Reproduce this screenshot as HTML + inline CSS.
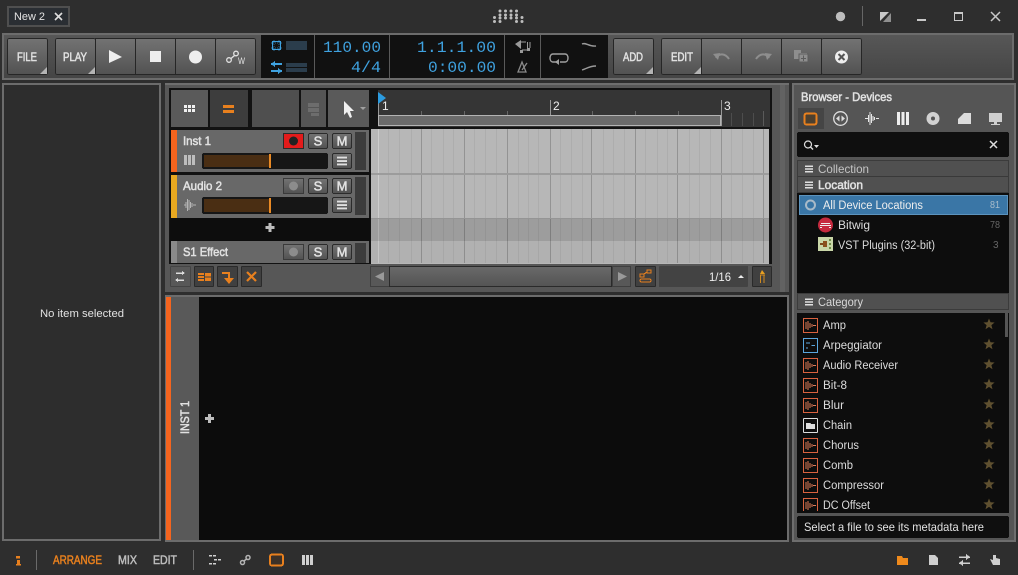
<!DOCTYPE html>
<html><head><meta charset="utf-8"><title>Bitwig</title>
<style>
html,body{margin:0;padding:0;background:#2e2e2e;width:1018px;height:575px;overflow:hidden}
svg{display:block}
text{font-family:"Liberation Sans",sans-serif}
text:not([font-size]){font-size:11px}
text:not([fill]){fill:#e2e2e2}
svg .b{stroke:#e2e2e2;stroke-width:.5px}
svg .m{font-family:"Liberation Mono",monospace;font-size:16px;fill:#3fa2e0}
svg .cat{fill:#dcdcdc;font-size:11.5px}
svg .o{fill:#e8801e;stroke:#e8801e}
svg .g{fill:#bdbdbd;stroke:#bdbdbd}
</style></head><body>
<svg width="1018" height="575" viewBox="0 0 1018 575" xmlns="http://www.w3.org/2000/svg" shape-rendering="crispEdges">
<defs>
<linearGradient id="btn" x1="0" y1="0" x2="0" y2="1"><stop offset="0" stop-color="#737373"/><stop offset="1" stop-color="#525252"/></linearGradient>
<linearGradient id="bar" x1="0" y1="0" x2="0" y2="1"><stop offset="0" stop-color="#575757"/><stop offset="1" stop-color="#454545"/></linearGradient>
<linearGradient id="sb" x1="0" y1="0" x2="0" y2="1"><stop offset="0" stop-color="#6a6a6a"/><stop offset="1" stop-color="#535353"/></linearGradient>
<clipPath id="clist"><rect x="798" y="313" width="210" height="198"/></clipPath>
<clipPath id="ctr"><rect x="170" y="129" width="200" height="134"/></clipPath>
<symbol id="aud" viewBox="0 0 15 15" overflow="visible"><rect x="0.5" y="0.5" width="14" height="14" fill="none" stroke="#d9623f" stroke-width="1"/><path d="M3 4V11M5 3V12M7 5V10M9 6V9M10 7.500H13" stroke="#e07a58" fill="none" stroke-width="1"/></symbol>
<symbol id="star" viewBox="0 0 12 12"><polygon shape-rendering="auto" points="6,0.5 7.5,4.3 11.6,4.5 8.4,7.1 9.5,11.2 6,8.9 2.5,11.2 3.6,7.1 0.4,4.5 4.5,4.3" fill="#5f5030"/></symbol>
<symbol id="ham" viewBox="0 0 8 8"><path d="M0 .5H8V2H0ZM0 3.250H8V4.750H0ZM0 6H8V7.500H0Z" fill="#e0e0e0" shape-rendering="auto"/></symbol>
</defs>

<!-- title bar -->
<rect width="1018" height="575" fill="#2e2e2e"/>
<rect x="8" y="7" width="61" height="19" fill="#2a2e33" stroke="#4f4f4f" stroke-width="2"/>
<text x="14" y="20" textLength="31" lengthAdjust="spacingAndGlyphs">New 2</text>
<path d="M55 13L62 20M62 13L55 20" stroke="#ddd" stroke-width="1.600" fill="none" shape-rendering="auto"/>
<g fill="#bdbdbd" shape-rendering="auto">
<circle cx="500" cy="11" r="1.500"/><circle cx="505.500" cy="11" r="1.500"/><circle cx="511" cy="11" r="1.500"/><circle cx="516.500" cy="11" r="1.500"/>
<circle cx="500" cy="15" r="1.500"/><circle cx="505.500" cy="15" r="1.500"/><circle cx="511" cy="15" r="1.500"/><circle cx="516.500" cy="15" r="1.500"/>
<circle cx="494.500" cy="17.500" r="1.500"/><circle cx="522" cy="17.500" r="1.500"/><circle cx="505.500" cy="18" r="1.500"/><circle cx="511" cy="18" r="1.500"/><circle cx="500" cy="18" r="1.500"/><circle cx="516.500" cy="18" r="1.500"/>
<circle cx="494.500" cy="21.500" r="1.500"/><circle cx="500" cy="21.500" r="1.500"/><circle cx="516.500" cy="21.500" r="1.500"/><circle cx="522" cy="21.500" r="1.500"/>
<circle cx="840.500" cy="16.500" r="4.700"/>
</g>
<rect x="862" y="6" width="1" height="20" fill="#666"/>
<g shape-rendering="auto"><polygon points="880,12 889,12 880,21" fill="#c8c8c8"/><polygon points="891,13 891,22 883,22" fill="#8f8f8f"/></g>
<rect x="917" y="19" width="9" height="2" fill="#c8c8c8"/>
<rect x="954.500" y="12.500" width="8" height="8" fill="none" stroke="#c8c8c8"/><rect x="954" y="12" width="9" height="2" fill="#c8c8c8"/>
<path d="M991 12L1000 21M1000 12L991 21" stroke="#c8c8c8" stroke-width="1.500" shape-rendering="auto"/>

<!-- toolbar -->
<rect x="2" y="33" width="1012" height="47" fill="#6c6c6c"/>
<rect x="4" y="35" width="1008" height="43" fill="url(#bar)"/>
<g stroke="#262626" fill="url(#btn)">
<rect x="7.500" y="38.500" width="40" height="36" rx="2"/>
<rect x="55.500" y="38.500" width="40" height="36" rx="2"/>
<rect x="95.500" y="38.500" width="40" height="36"/>
<rect x="135.500" y="38.500" width="40" height="36"/>
<rect x="175.500" y="38.500" width="40" height="36"/>
<rect x="215.500" y="38.500" width="40" height="36" rx="2"/>
<rect x="613.500" y="38.500" width="40" height="36" rx="2"/>
<rect x="661.500" y="38.500" width="40" height="36" rx="2"/>
<rect x="701.500" y="38.500" width="40" height="36"/>
<rect x="741.500" y="38.500" width="40" height="36"/>
<rect x="781.500" y="38.500" width="40" height="36"/>
<rect x="821.500" y="38.500" width="40" height="36" rx="2"/>
</g>
<g fill="#b4b4b4" shape-rendering="auto">
<polygon points="47,67 47,74 40,74"/><polygon points="95,67 95,74 88,74"/><polygon points="653,67 653,74 646,74"/><polygon points="701,67 701,74 694,74"/>
</g>
<text class="b" x="17" y="61" font-size="12" textLength="20" lengthAdjust="spacingAndGlyphs">FILE</text>
<text class="b" x="63" y="61" font-size="12" textLength="24" lengthAdjust="spacingAndGlyphs">PLAY</text>
<text class="b" x="623" y="61" font-size="12" textLength="20" lengthAdjust="spacingAndGlyphs">ADD</text>
<text class="b" x="671" y="61" font-size="12" textLength="22" lengthAdjust="spacingAndGlyphs">EDIT</text>
<polygon points="109,50 122,57 109,63" fill="#eee" shape-rendering="auto"/>
<rect x="150" y="51" width="11" height="11" fill="#eee"/>
<circle cx="195.500" cy="57" r="6.500" fill="#eee" shape-rendering="auto"/>
<g fill="none" stroke="#e2e2e2" stroke-width="1.300" shape-rendering="auto"><circle cx="229" cy="60" r="2.300"/><circle cx="236" cy="53.500" r="2.300"/><path d="M231 58.500L234.500 55.500"/></g>
<text x="238" y="64" font-size="9" textLength="7" lengthAdjust="spacingAndGlyphs">W</text>
<!-- undo etc -->
<g fill="none" stroke="#8e8e8e" stroke-width="2" shape-rendering="auto"><path d="M716 58C719 53 725 53 729 59"/><path d="M756 59C760 53 766 53 769 58"/></g>
<polygon points="713,54 720,53 718,60" fill="#8e8e8e" shape-rendering="auto"/><polygon points="772,54 765,53 767,60" fill="#8e8e8e" shape-rendering="auto"/>
<path d="M794 50H801V53H807L808 62H799V59H794Z" fill="#8e8e8e" shape-rendering="auto"/><rect x="799" y="54" width="9" height="8" fill="#8e8e8e" stroke="#5d5d5d"/><path d="M803.500 55.500V61M801 58.300H806" stroke="#5c5c5c"/>
<circle cx="841.500" cy="57" r="6.500" fill="#eee" shape-rendering="auto"/>
<path d="M838.500 54L844.500 60M844.500 54L838.500 60" stroke="#555" stroke-width="2" shape-rendering="auto"/>

<!-- display -->
<rect x="261" y="35" width="347" height="43" fill="#111"/>
<rect x="314" y="35" width="1" height="43" fill="#5a5a5a"/><rect x="389" y="35" width="1" height="43" fill="#5a5a5a"/><rect x="504" y="35" width="1" height="43" fill="#5a5a5a"/><rect x="540" y="35" width="1" height="43" fill="#5a5a5a"/>
<rect x="272.500" y="41.500" width="8" height="8" fill="none" stroke="#3fa2e0"/><path d="M271 43H282M271 48H282M274 40V51M279 40V51" stroke="#3fa2e0" stroke-dasharray="1 1" opacity=".6"/>
<rect x="286" y="41" width="21" height="9" fill="#2b3d4c"/>
<path d="M271 64H282M271 71H282" stroke="#3fa2e0" stroke-width="2"/><polygon points="275,61 271,64 275,67" fill="#3fa2e0"/><polygon points="278,68 282,71 278,74" fill="#3fa2e0"/>
<rect x="286" y="63" width="21" height="4" fill="#2b3d4c"/><rect x="286" y="68" width="21" height="4" fill="#2b3d4c"/>
<text class="m" x="323" y="52" textLength="58" lengthAdjust="spacingAndGlyphs">110.00</text>
<text class="m" x="351" y="72" textLength="30" lengthAdjust="spacingAndGlyphs">4/4</text>
<text class="m" x="417" y="52" textLength="79" lengthAdjust="spacingAndGlyphs">1.1.1.00</text>
<text class="m" x="428" y="72" textLength="68" lengthAdjust="spacingAndGlyphs">0:00.00</text>
<polygon points="515,44 521,40 521,49" fill="#9a9a9a" shape-rendering="auto"/><path d="M521 42H526M527.500 42V48M530 42V48M522 50H529M522 50V52" stroke="#9a9a9a" fill="none"/><rect x="520" y="50" width="3" height="3" fill="#9a9a9a"/><rect x="527" y="48" width="3" height="3" fill="#9a9a9a"/>
<path d="M518 72L522 62L526 72ZM522 70L527 63" fill="none" stroke="#8a8a8a" stroke-width="1.300" shape-rendering="auto"/>
<path d="M557 62H553C549 62 549 54 553 54H565C569 54 569 62 565 62H560" fill="none" stroke="#a0a0a0" stroke-width="1.400" shape-rendering="auto"/><polygon points="559,59 555,62 559,65" fill="#a0a0a0" shape-rendering="auto"/>
<path d="M582 44C586 42 589 47 596 46" fill="none" stroke="#9a9a9a" stroke-width="1.400" shape-rendering="auto"/><path d="M582 70C586 69 589 66 596 66" fill="none" stroke="#9a9a9a" stroke-width="1.400" shape-rendering="auto"/>

<!-- left panel -->
<rect x="3" y="84" width="157" height="456" fill="#2d2d2d" stroke="#6c6c6c" stroke-width="2"/>
<text x="40" y="317" textLength="84" lengthAdjust="spacingAndGlyphs">No item selected</text>

<!-- arranger -->
<rect x="165" y="83" width="624" height="209" fill="#575757"/>
<rect x="165" y="83" width="624" height="2" fill="#6e6e6e"/>
<rect x="780" y="85" width="5" height="207" fill="#626262"/>
<rect x="169" y="88" width="603" height="176" fill="#121212"/>
<!-- header buttons -->
<rect x="171" y="90" width="37" height="37" fill="#5a5a5a"/>
<rect x="210" y="90" width="38" height="37" fill="#3d3d3d"/>
<rect x="252" y="90" width="47" height="37" fill="#4f4f4f"/>
<rect x="301" y="90" width="25" height="37" fill="#555"/>
<rect x="328" y="90" width="41" height="37" fill="#5a5a5a"/>
<g fill="#f0f0f0"><rect x="184" y="105" width="3" height="3"/><rect x="188" y="105" width="3" height="3"/><rect x="192" y="105" width="3" height="3"/><rect x="184" y="109" width="3" height="3"/><rect x="188" y="109" width="3" height="3"/><rect x="192" y="109" width="3" height="3"/></g>
<rect x="223" y="105" width="11" height="3" fill="#e8801e"/><rect x="223" y="110" width="11" height="3" fill="#e8801e"/>
<g fill="#6d6d6d"><rect x="308" y="103" width="11" height="4"/><rect x="308" y="108" width="11" height="4"/><rect x="311" y="113" width="8" height="3"/></g>
<polygon points="344,101 344,115 347,112 350,118 352,117 350,111 354,111" fill="#f0f0f0" shape-rendering="auto"/>
<polygon points="360,107 366,107 363,110" fill="#a0a0a0" shape-rendering="auto"/>
<!-- ruler -->
<rect x="378" y="90" width="392" height="37" fill="#353535"/>
<g fill="#666"><rect x="378" y="100" width="1" height="15" fill="#999"/><rect x="550" y="100" width="1" height="15" fill="#999"/><rect x="721" y="100" width="1" height="26" fill="#999"/>
<rect x="421" y="111" width="1" height="4"/><rect x="464" y="111" width="1" height="4"/><rect x="507" y="111" width="1" height="4"/><rect x="592" y="111" width="1" height="4"/><rect x="635" y="111" width="1" height="4"/><rect x="678" y="111" width="1" height="4"/>
<rect x="731" y="113" width="1" height="13" fill="#4d4d4d"/><rect x="742" y="113" width="1" height="13" fill="#4d4d4d"/><rect x="753" y="113" width="1" height="13" fill="#4d4d4d"/><rect x="763" y="111" width="1" height="15" fill="#5a5a5a"/></g>
<rect x="378.500" y="115.500" width="342" height="10" fill="#6b6b6b" stroke="#b4b4b4"/>
<text x="382" y="110" fill="#eee" font-size="12">1</text><text x="553" y="110" fill="#eee" font-size="12">2</text><text x="724" y="110" fill="#eee" font-size="12">3</text>
<polygon points="378,92 386,98 378,104" fill="#2c9ce0" shape-rendering="auto"/>
<!-- grid -->
<rect x="371" y="129" width="398" height="135" fill="#b7b7b7"/>
<g fill="#adadad">
<rect x="388" y="129" width="1" height="134"/><rect x="399" y="129" width="1" height="134"/><rect x="411" y="129" width="1" height="134"/><rect x="431" y="129" width="1" height="134"/><rect x="443" y="129" width="1" height="134"/><rect x="453" y="129" width="1" height="134"/><rect x="474" y="129" width="1" height="134"/><rect x="485" y="129" width="1" height="134"/><rect x="496" y="129" width="1" height="134"/><rect x="518" y="129" width="1" height="134"/><rect x="528" y="129" width="1" height="134"/><rect x="538" y="129" width="1" height="134"/><rect x="560" y="129" width="1" height="134"/><rect x="571" y="129" width="1" height="134"/><rect x="582" y="129" width="1" height="134"/><rect x="603" y="129" width="1" height="134"/><rect x="613" y="129" width="1" height="134"/><rect x="624" y="129" width="1" height="134"/><rect x="645" y="129" width="1" height="134"/><rect x="657" y="129" width="1" height="134"/><rect x="667" y="129" width="1" height="134"/><rect x="689" y="129" width="1" height="134"/><rect x="699" y="129" width="1" height="134"/><rect x="710" y="129" width="1" height="134"/><rect x="731" y="129" width="1" height="134"/><rect x="742" y="129" width="1" height="134"/><rect x="753" y="129" width="1" height="134"/>
</g>
<g fill="#939393">
<rect x="421" y="129" width="1" height="134"/><rect x="464" y="129" width="1" height="134"/><rect x="507" y="129" width="1" height="134"/><rect x="550" y="129" width="1" height="134"/><rect x="591" y="129" width="1" height="134"/><rect x="635" y="129" width="1" height="134"/><rect x="677" y="129" width="1" height="134"/><rect x="721" y="129" width="1" height="134"/><rect x="763" y="129" width="1" height="134"/>
</g>
<rect x="378" y="129" width="1" height="134" fill="#cccccc"/>
<rect x="371" y="219" width="398" height="22" fill="#000" opacity=".14"/>
<rect x="371" y="241" width="398" height="22" fill="#000" opacity=".03"/>
<rect x="371" y="173" width="398" height="2" fill="#9c9c9c"/>
<rect x="371" y="218" width="398" height="1" fill="#959595"/>
<!-- tracks -->
<rect x="170" y="129" width="200" height="134" fill="#111"/>
<g clip-path="url(#ctr)">
<!-- Inst 1 -->
<rect x="171" y="130" width="198" height="42" fill="#686868"/>
<rect x="171" y="130" width="6" height="42" fill="#f5641e"/>
<text class="b" x="183" y="145" font-size="12" textLength="28" lengthAdjust="spacingAndGlyphs">Inst 1</text>
<rect x="283.500" y="133.500" width="20" height="15" fill="#e31b1b" stroke="#2b2b2b"/><circle cx="293.500" cy="141" r="4.500" fill="#222" shape-rendering="auto"/>
<rect x="308.500" y="133.500" width="19" height="15" rx="1.500" fill="url(#btn)" stroke="#2b2b2b"/><rect x="332.500" y="133.500" width="19" height="15" rx="1.500" fill="url(#btn)" stroke="#2b2b2b"/>
<text class="b" x="318" y="145.500" text-anchor="middle" font-size="13">S</text><text class="b" x="342" y="145.500" text-anchor="middle" font-size="13">M</text>
<rect x="355" y="132" width="11" height="38" fill="#3c3c3c"/>
<g fill="#bdbdbd"><rect x="184" y="155" width="3" height="10"/><rect x="188" y="155" width="3" height="10"/><rect x="192" y="155" width="3" height="10"/></g>
<rect x="202" y="153" width="126" height="16" rx="2" fill="#161616"/>
<rect x="204" y="155" width="65" height="12" fill="#4a2e13"/><rect x="269" y="154" width="2" height="14" fill="#e98a25"/>
<rect x="332.500" y="153.500" width="19" height="15" rx="1.500" fill="url(#btn)" stroke="#2b2b2b"/><use href="#ham" x="337" y="156" width="10" height="10"/>
<!-- Audio 2 -->
<rect x="171" y="175" width="198" height="43" fill="#686868"/>
<rect x="171" y="175" width="6" height="43" fill="#e8a820"/>
<text class="b" x="183" y="190" font-size="12" textLength="39" lengthAdjust="spacingAndGlyphs">Audio 2</text>
<rect x="283.500" y="178.500" width="20" height="15" fill="url(#btn)" stroke="#3a3a3a"/><circle cx="293.500" cy="186" r="4.500" fill="#8c8c8c" shape-rendering="auto"/>
<rect x="308.500" y="178.500" width="19" height="15" rx="1.500" fill="url(#btn)" stroke="#2b2b2b"/><rect x="332.500" y="178.500" width="19" height="15" rx="1.500" fill="url(#btn)" stroke="#2b2b2b"/>
<text class="b" x="318" y="190.500" text-anchor="middle" font-size="13">S</text><text class="b" x="342" y="190.500" text-anchor="middle" font-size="13">M</text>
<rect x="355" y="177" width="11" height="38" fill="#3c3c3c"/>
<path d="M184 205H186M186 202V208M187.500 199V211M189 200V210M190.500 202V208M192 203V207M193 205H196" stroke="#b4b4b4" fill="none"/>
<rect x="202" y="197" width="126" height="17" rx="2" fill="#161616"/>
<rect x="204" y="199" width="65" height="13" fill="#4a2e13"/><rect x="269" y="198" width="2" height="15" fill="#e98a25"/>
<rect x="332.500" y="197.500" width="19" height="15" rx="1.500" fill="url(#btn)" stroke="#2b2b2b"/><use href="#ham" x="337" y="200" width="10" height="10"/>
<!-- add -->
<rect x="170" y="218" width="200" height="23" fill="#0d0d0d"/>
<path d="M270 223V232M265.500 227.500H274.500" stroke="#bdbdbd" stroke-width="3"/>
<!-- S1 Effect -->
<rect x="171" y="241" width="198" height="22" fill="#686868"/>
<rect x="171" y="241" width="6" height="22" fill="#8a8a8a"/>
<text class="b" x="183" y="256" font-size="12" textLength="45" lengthAdjust="spacingAndGlyphs">S1 Effect</text>
<rect x="283.500" y="244.500" width="20" height="15" fill="url(#btn)" stroke="#3a3a3a"/><circle cx="293.500" cy="252" r="4.500" fill="#8c8c8c" shape-rendering="auto"/>
<rect x="308.500" y="244.500" width="19" height="15" rx="1.500" fill="url(#btn)" stroke="#2b2b2b"/><rect x="332.500" y="244.500" width="19" height="15" rx="1.500" fill="url(#btn)" stroke="#2b2b2b"/>
<text class="b" x="318" y="256.500" text-anchor="middle" font-size="13">S</text><text class="b" x="342" y="256.500" text-anchor="middle" font-size="13">M</text>
<rect x="355" y="243" width="11" height="20" fill="#3c3c3c"/>
</g>
<!-- arranger bottom bar -->
<rect x="169" y="264" width="603" height="27" fill="#575757"/>
<rect x="170.500" y="266.500" width="20" height="20" rx="1" fill="#585858" stroke="#444"/>
<path d="M176 273H184M176 280H184" stroke="#ddd" stroke-width="1.500"/><polygon points="182,271 185,273 182,275" fill="#ddd"/><polygon points="178,278 175,280 178,282" fill="#ddd"/>
<rect x="194.500" y="266.500" width="19" height="20" rx="1" fill="#404040" stroke="#2a2a2a"/>
<g fill="#e8801e"><rect x="198" y="273" width="6" height="2"/><rect x="198" y="276" width="6" height="2"/><rect x="198" y="279" width="6" height="2"/><rect x="205" y="273" width="6" height="3.500"/><rect x="205" y="277.500" width="6" height="3.500"/></g>
<rect x="217.500" y="266.500" width="20" height="20" rx="1" fill="#404040" stroke="#2a2a2a"/>
<path d="M222 273H229V279" fill="none" stroke="#e8801e" stroke-width="2"/><polygon points="224,278 234,278 229,284" fill="#e8801e" shape-rendering="auto"/>
<rect x="241.500" y="266.500" width="20" height="20" rx="1" fill="#404040" stroke="#2a2a2a"/>
<path d="M247 272L256 281M256 272L247 281" stroke="#e8801e" stroke-width="2.200" shape-rendering="auto"/>
<rect x="370.500" y="266.500" width="19" height="20" fill="#585858" stroke="#3f3f3f"/><polygon points="384,272 375,276.500 384,281" fill="#999" shape-rendering="auto"/>
<rect x="390" y="266" width="221" height="21" fill="url(#sb)"/><rect x="390" y="266" width="221" height="1" fill="#2a2a2a"/><rect x="390" y="286" width="221" height="1" fill="#2a2a2a"/><rect x="389" y="266" width="1" height="21" fill="#2a2a2a"/><rect x="611" y="266" width="1" height="21" fill="#2a2a2a"/>
<rect x="612.500" y="266.500" width="18" height="20" fill="#585858" stroke="#3f3f3f"/><polygon points="618,272 627,276.500 618,281" fill="#999" shape-rendering="auto"/>
<rect x="635.500" y="266.500" width="20" height="20" rx="1" fill="#404040" stroke="#2a2a2a"/>
<g fill="none" stroke="#e8801e" stroke-width="1.200"><rect x="640" y="279" width="11" height="3" rx="1.500"/><rect x="640" y="274" width="4" height="3"/><rect x="647" y="270" width="4" height="3"/><path d="M644 274L647 272"/></g>
<rect x="659" y="266" width="89" height="21" rx="1" fill="#434343"/>
<text x="709" y="281" font-size="12" textLength="22" lengthAdjust="spacingAndGlyphs" fill="#eee">1/16</text>
<polygon points="738,278 744,278 741,275" fill="#eee" shape-rendering="auto"/>
<rect x="752.500" y="266.500" width="19" height="20" rx="1" fill="#404040" stroke="#2a2a2a"/>
<polygon points="762,270 765,274 760,274" fill="#e8a020" shape-rendering="auto"/><path d="M760 275H765M760.500 275V283M764 275V283" stroke="#d08a20" fill="none"/>

<!-- detail panel -->
<rect x="165" y="295" width="624" height="247" fill="#6c6c6c"/>
<rect x="167" y="297" width="620" height="243" fill="#0c0c0c"/>
<rect x="166" y="297" width="5" height="243" fill="#f5641e"/>
<rect x="171" y="297" width="28" height="243" fill="#595959"/>
<text class="b" x="189" y="434" font-size="12" transform="rotate(-90 189 434)" textLength="33" lengthAdjust="spacingAndGlyphs">INST 1</text>
<path d="M209.500 414V423M205 418.500H214" stroke="#bdbdbd" stroke-width="3"/>

<!-- browser -->
<rect x="792" y="83" width="224" height="459" fill="#6e6e6e"/>
<rect x="794" y="85" width="220" height="455" fill="#555"/>
<text class="b" x="801" y="101" font-size="12" textLength="91" lengthAdjust="spacingAndGlyphs">Browser - Devices</text>
<rect x="798" y="108" width="26" height="21" fill="#454545"/>
<rect x="804.500" y="113.500" width="12" height="11" rx="2" fill="#4c4030" stroke="#e8801e" stroke-width="2"/>
<g shape-rendering="auto">
<circle cx="840.500" cy="118.500" r="6.800" fill="none" stroke="#ddd" stroke-width="1.300"/><polygon points="839.500,115.500 839.500,121.500 836,118.500" fill="#ddd"/><polygon points="841.500,115.500 841.500,121.500 845,118.500" fill="#ddd"/>
<path d="M865 118.500H868M868.500 115V122M870 112V125M871.500 114V123M873 116V121M874.500 117V120M876 118.500H879" stroke="#e6e6e6" fill="none"/>
<circle cx="933" cy="118.500" r="6.500" fill="#d2d2d2"/><circle cx="933" cy="118.500" r="2" fill="#555"/>
<polygon points="958,124 958,119 964,113 971,113 971,124" fill="#dcdcdc"/>
</g>
<g fill="#eee"><rect x="897" y="112" width="3" height="13"/><rect x="901.500" y="112" width="3" height="13"/><rect x="906" y="112" width="3" height="13"/></g>
<rect x="989" y="113" width="13" height="9" fill="#cfcfcf"/><rect x="994" y="122" width="3" height="2" fill="#cfcfcf"/><rect x="991" y="124" width="9" height="1" fill="#cfcfcf"/>
<rect x="797" y="132" width="212" height="25" rx="2" fill="#0f0f0f"/>
<g shape-rendering="auto"><circle cx="808" cy="144.500" r="3.500" fill="none" stroke="#ddd" stroke-width="1.200"/><path d="M810.500 147L813 149.500" stroke="#ddd" stroke-width="1.400"/><polygon points="814,145 819,145 816.500,148" fill="#ddd"/>
<path d="M990 141L997 148M997 141L990 148" stroke="#ddd" stroke-width="1.500"/></g>
<rect x="797.500" y="160.500" width="211" height="32" fill="#505050" stroke="#3b3b3b"/>
<rect x="798" y="176" width="210" height="1" fill="#393939"/>
<use href="#ham" x="805" y="165" width="8" height="8"/><use href="#ham" x="805" y="181" width="8" height="8"/>
<text x="818" y="173" textLength="51" lengthAdjust="spacingAndGlyphs" fill="#c4c4c4" font-size="12">Collection</text>
<text class="b" x="818" y="189" font-size="12" textLength="45" lengthAdjust="spacingAndGlyphs">Location</text>
<rect x="797" y="193" width="212" height="100" fill="#0d0d0d"/>
<rect x="799.500" y="195.500" width="208" height="19" fill="#3a76a6" stroke="#5c93bd"/>
<circle cx="810.500" cy="205" r="4.500" fill="none" stroke="#a9bac8" stroke-width="2" shape-rendering="auto"/>
<text class="cat" x="823" y="209" textLength="100" lengthAdjust="spacingAndGlyphs" style="fill:#eee">All Device Locations</text>
<text x="990" y="208" textLength="10" lengthAdjust="spacingAndGlyphs" fill="#a8bccb" font-size="10">81</text>
<circle cx="825.500" cy="225" r="7.500" fill="#c62a3f" shape-rendering="auto"/>
<g fill="#eee"><rect x="821" y="223" width="9" height="1"/><rect x="820" y="225" width="11" height="1"/><rect x="820" y="227" width="2" height="1"/><rect x="829" y="227" width="2" height="1"/></g>
<text class="cat" x="838" y="229" textLength="32" lengthAdjust="spacingAndGlyphs">Bitwig</text>
<text x="990" y="228" textLength="10" lengthAdjust="spacingAndGlyphs" fill="#666" font-size="10">78</text>
<rect x="818" y="237" width="15" height="14" fill="#c9d6a8"/><path d="M820 244H826" stroke="#7d4a1c" stroke-width="2"/><rect x="823" y="241" width="4" height="6" fill="#8a4f1e"/><g fill="#6d8a45"><rect x="829" y="239" width="2" height="2"/><rect x="829" y="243" width="2" height="2"/><rect x="829" y="247" width="2" height="2"/></g>
<text class="cat" x="838" y="249" textLength="97" lengthAdjust="spacingAndGlyphs">VST Plugins (32-bit)</text>
<text x="993" y="248" fill="#666" font-size="10">3</text>
<rect x="797.500" y="293.500" width="211" height="16" fill="#505050" stroke="#3b3b3b"/>
<use href="#ham" x="805" y="298" width="8" height="8"/>
<text x="818" y="306" textLength="45" lengthAdjust="spacingAndGlyphs" fill="#d8d8d8" font-size="12">Category</text>
<rect x="797" y="313" width="212" height="200" fill="#0d0d0d"/>
<rect x="1005" y="313" width="3" height="24" fill="#555"/>
<g clip-path="url(#clist)">
<use href="#aud" x="803" y="318" width="15" height="15"/>
<rect x="803.500" y="338.500" width="14" height="14" fill="none" stroke="#5aa6de"/><path d="M806 343H810M806 348H808M811.500 345.500H815" stroke="#5aa6de" fill="none"/>
<use href="#aud" x="803" y="358" width="15" height="15"/>
<use href="#aud" x="803" y="378" width="15" height="15"/>
<use href="#aud" x="803" y="398" width="15" height="15"/>
<rect x="803.500" y="418.500" width="14" height="14" fill="none" stroke="#ddd" rx="1"/><path d="M806 423H810L811 424H815V429H806Z" fill="#ddd"/>
<use href="#aud" x="803" y="438" width="15" height="15"/>
<use href="#aud" x="803" y="458" width="15" height="15"/>
<use href="#aud" x="803" y="478" width="15" height="15"/>
<use href="#aud" x="803" y="498" width="15" height="15"/>
<text class="cat" x="823" y="329" textLength="23" lengthAdjust="spacingAndGlyphs">Amp</text>
<text class="cat" x="823" y="349" textLength="59" lengthAdjust="spacingAndGlyphs">Arpeggiator</text>
<text class="cat" x="823" y="369" textLength="75" lengthAdjust="spacingAndGlyphs">Audio Receiver</text>
<text class="cat" x="823" y="389" textLength="24" lengthAdjust="spacingAndGlyphs">Bit-8</text>
<text class="cat" x="823" y="409" textLength="21" lengthAdjust="spacingAndGlyphs">Blur</text>
<text class="cat" x="823" y="429" textLength="29" lengthAdjust="spacingAndGlyphs">Chain</text>
<text class="cat" x="823" y="449" textLength="36" lengthAdjust="spacingAndGlyphs">Chorus</text>
<text class="cat" x="823" y="469" textLength="30" lengthAdjust="spacingAndGlyphs">Comb</text>
<text class="cat" x="823" y="489" textLength="61" lengthAdjust="spacingAndGlyphs">Compressor</text>
<text class="cat" x="823" y="509" textLength="47" lengthAdjust="spacingAndGlyphs">DC Offset</text>
<use href="#star" x="983" y="318" width="12" height="12"/><use href="#star" x="983" y="338" width="12" height="12"/><use href="#star" x="983" y="358" width="12" height="12"/><use href="#star" x="983" y="378" width="12" height="12"/><use href="#star" x="983" y="398" width="12" height="12"/><use href="#star" x="983" y="418" width="12" height="12"/><use href="#star" x="983" y="438" width="12" height="12"/><use href="#star" x="983" y="458" width="12" height="12"/><use href="#star" x="983" y="478" width="12" height="12"/><use href="#star" x="983" y="498" width="12" height="12"/>
</g>
<rect x="797" y="516" width="212" height="22" rx="2" fill="#0f0f0f"/>
<text x="804" y="531" textLength="180" lengthAdjust="spacingAndGlyphs" font-size="12">Select a file to see its metadata here</text>

<!-- status bar -->
<rect x="16" y="556" width="4" height="2.500" fill="#e8801e"/><rect x="17" y="560" width="3" height="4" fill="#e8801e"/><rect x="16" y="564" width="5" height="1.500" fill="#e8801e"/>
<rect x="36" y="550" width="1" height="20" fill="#6a6a6a"/>
<text class="b o" x="53" y="564" font-size="12" textLength="49" lengthAdjust="spacingAndGlyphs">ARRANGE</text>
<text class="b g" x="118" y="564" font-size="12" textLength="19" lengthAdjust="spacingAndGlyphs">MIX</text>
<text class="b g" x="153" y="564" font-size="12" textLength="24" lengthAdjust="spacingAndGlyphs">EDIT</text>
<rect x="193" y="550" width="1" height="20" fill="#6a6a6a"/>
<g fill="#d0d0d0"><rect x="209" y="555" width="3" height="1.500"/><rect x="213" y="555" width="3" height="1.500"/><rect x="214" y="559" width="3" height="1.500"/><rect x="218" y="559" width="3" height="1.500"/><rect x="209" y="563" width="3" height="1.500"/><rect x="213" y="563" width="3" height="1.500"/></g>
<g fill="none" stroke="#b4b4b4" stroke-width="1.500" shape-rendering="auto"><circle cx="242.500" cy="562.500" r="2"/><circle cx="248" cy="557.500" r="2"/><path d="M244 561L246.500 559"/></g>
<rect x="270" y="554.500" width="13" height="11" rx="2" fill="#3c3128" stroke="#e8801e" stroke-width="2"/>
<g fill="#cfcfcf"><rect x="302" y="555" width="3" height="10"/><rect x="306" y="555" width="3" height="10"/><rect x="310" y="555" width="3" height="10"/></g>
<path d="M897 556H902L903 558H908V565H897Z" fill="#ef8a1c"/>
<path d="M929 555H935L938 558V565H929Z" fill="#cfcfcf" shape-rendering="auto"/>
<path d="M959 557H970M959 563H970" stroke="#cfcfcf" stroke-width="1.500"/><polygon points="966,554 970,557 966,560" fill="#cfcfcf"/><polygon points="963,560 959,563 963,566" fill="#cfcfcf"/>
<path d="M993 555V560L990 559L993 565H1000V559L996 558V555Z" fill="#cfcfcf" shape-rendering="auto"/>
</svg>
</body></html>
